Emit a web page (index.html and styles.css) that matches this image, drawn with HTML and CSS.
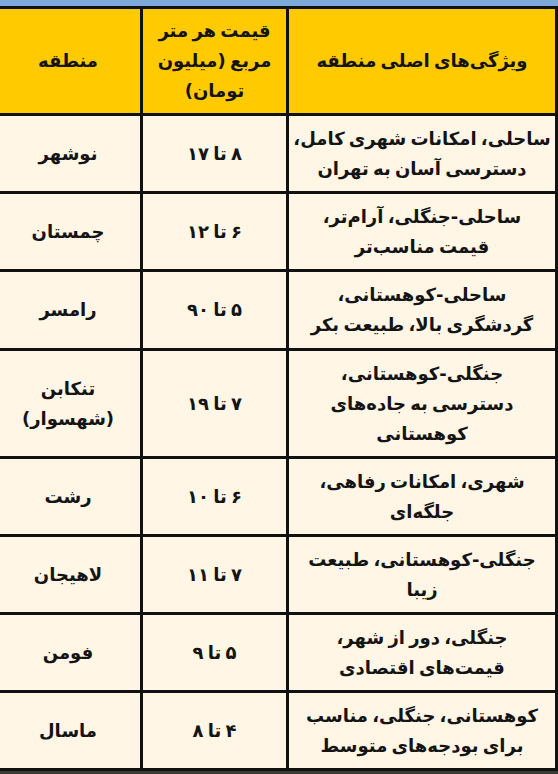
FILE: index.html
```html
<!DOCTYPE html>
<html lang="fa" dir="rtl">
<head>
<meta charset="utf-8">
<link rel="stylesheet" href="styles.css">
</head>
<body>
<div class="page">
  <div class="strip"></div>
  <table class="grid">
    <colgroup>
      <col class="c-feat">
      <col class="c-price">
      <col class="c-region">
    </colgroup>
    <thead>
      <tr class="head">
        <th>ویژگی‌های اصلی منطقه</th>
        <th>قیمت هر متر<br>مربع (میلیون<br>تومان)</th>
        <th>منطقه</th>
      </tr>
    </thead>
    <tbody>
      <tr class="r78"><td>ساحلی، امکانات شهری کامل،<br>دسترسی آسان به تهران</td><td>۸ تا ۱۷</td><td>نوشهر</td></tr>
      <tr class="r78"><td>ساحلی-جنگلی، آرام‌تر،<br>قیمت مناسب‌تر</td><td>۶ تا ۱۲</td><td>چمستان</td></tr>
      <tr class="r79"><td>ساحلی-کوهستانی،<br>گردشگری بالا، طبیعت بکر</td><td>۵ تا ۹۰</td><td>رامسر</td></tr>
      <tr class="r108"><td>جنگلی-کوهستانی،<br>دسترسی به جاده‌های<br>کوهستانی</td><td>۷ تا ۱۹</td><td>تنکابن<br>(شهسوار)</td></tr>
      <tr class="r78"><td>شهری، امکانات رفاهی،<br>جلگه‌ای</td><td>۶ تا ۱۰</td><td>رشت</td></tr>
      <tr class="r78"><td>جنگلی-کوهستانی، طبیعت<br>زیبا</td><td>۷ تا ۱۱</td><td>لاهیجان</td></tr>
      <tr class="r78"><td>جنگلی، دور از شهر،<br>قیمت‌های اقتصادی</td><td>۵ تا ۹</td><td>فومن</td></tr>
      <tr class="r78"><td>کوهستانی، جنگلی، مناسب<br>برای بودجه‌های متوسط</td><td>۴ تا ۸</td><td>ماسال</td></tr>
    </tbody>
  </table>
</div>
</body>
</html>
```
FILE: styles.css
```css
html, body {
  margin: 0;
  padding: 0;
}
body {
  background: #3a3c33;
  font-family: "DejaVu Sans", sans-serif;
}
.page {
  width: 558px;
  height: 774px;
  overflow: hidden;
  background: #3a3c33;
}
.strip {
  height: 6px;
  background: #7eaadb;
}
.grid {
  border-collapse: collapse;
  direction: rtl;
  width: 562px;
  table-layout: fixed;
  border-left: 1px solid #111;
}
.c-feat { width: 269px; }
.c-price { width: 146px; }
.c-region { width: 147px; }
.grid th,
.grid td {
  border: 3px solid #111;
  padding: 0 2px;
  text-align: center;
  vertical-align: middle;
  font-weight: bold;
  font-size: 18px;
  line-height: 30px;
  word-spacing: -2px;
  color: #141414;
}
.grid th {
  background: #ffcb00;
}
.grid td {
  background: #fff6e6;
}
.head th { height: 104px; }
.r78 td { height: 75px; }
.r79 td { height: 76px; }
.r108 td { height: 105px; }
```
